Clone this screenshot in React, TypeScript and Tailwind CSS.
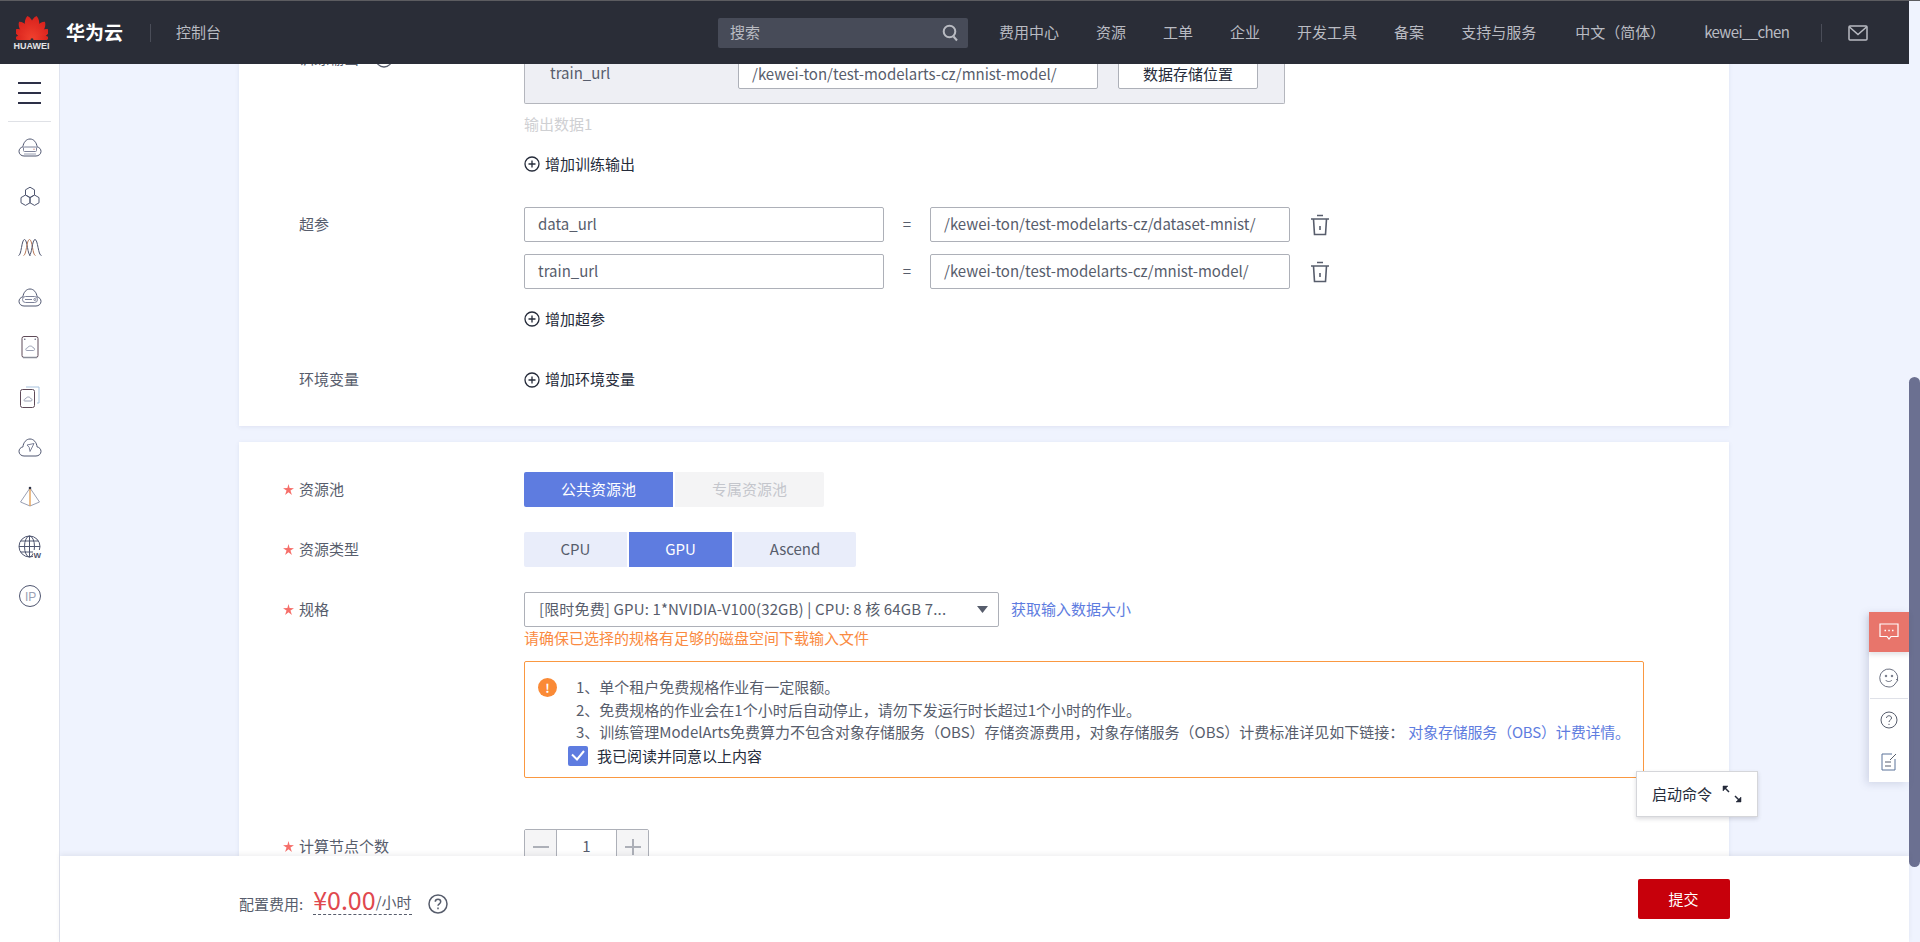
import type { ReactNode } from "react"

const navItems = ["费用中心", "资源", "工单", "企业", "开发工具", "备案", "支持与服务"]

function HuaweiLogo() {
  const petals = [
    [-11, 24],
    [11, 24],
    [-36, 22],
    [36, 22],
    [-61, 20],
    [61, 20],
    [-84, 17],
    [84, 17],
  ]
  return (
    <svg width="32" height="26" viewBox="0 0 32 26">
      <defs>
        <linearGradient id="petal" x1="0" y1="0" x2="0" y2="1">
          <stop offset="0" stopColor="#d8211c" />
          <stop offset="1" stopColor="#f0402e" />
        </linearGradient>
      </defs>
      {petals.map(([a, l]) => (
        <path
          key={a}
          transform={`translate(16 25.5) rotate(${a})`}
          fill="url(#petal)"
          d={`M0 -1 C${-l * 0.27} ${-l * 0.4} ${-l * 0.22} ${-l * 0.85} 0 ${-l} C${l * 0.22} ${-l * 0.85} ${l * 0.27} ${-l * 0.4} 0 -1Z`}
        />
      ))}
    </svg>
  )
}

function CloudBase({ children }: { children?: ReactNode }) {
  return (
    <svg width="24" height="24" viewBox="0 0 24 24" fill="none" stroke="#4f5670" strokeWidth="1">
      <path d="M6 20h12c2.700 0 5-1.900 5-4.600 0-2.300-1.600-4.100-3.900-4.500C18.600 6.500 15.800 3 12 3S5.400 6.500 4.900 10.900C2.600 11.300 1 13.100 1 15.400 1 18.100 3.300 20 6 20z" />
      {children}
    </svg>
  )
}

const sideIcons: ReactNode[] = [
  <CloudBase key="a">
    <rect x="5.500" y="11" width="13" height="4.500" rx="1" stroke="#7d8299" />
    <path d="M6 18h12" stroke="#9aa0b4" />
    <circle cx="16" cy="13.200" r=".6" fill="#c26a5a" stroke="none" />
  </CloudBase>,
  <svg key="b" width="24" height="24" viewBox="0 0 24 24" fill="none" stroke="#4f5670" strokeWidth="1">
    <path d="M12 2.200l4.500 2.600v5.200L12 12.600 7.500 10V4.800z" />
    <path d="M7.500 10l4.500 2.600v5.200l-4.500 2.600L3 17.800v-5.200z" />
    <path d="M16.500 10l4.500 2.600v5.200l-4.500 2.600-4.500-2.600v-5.200z" />
  </svg>,
  <svg key="c" width="24" height="24" viewBox="0 0 24 24" fill="none" stroke="#4f5670" strokeWidth="1">
    <path d="M.5 20.500C3.500 20.500 3.500 4.500 6.500 4.500S9.500 20.500 12.500 20.500" />
    <path d="M5.500 20.500C8.500 20.500 8.500 4.500 11.500 4.500S14.500 20.500 17.500 20.500" stroke="#b97a5a" />
    <path d="M11 20.500C14 20.500 14 4.500 17 4.500S20 20.500 23.500 20.500" />
  </svg>,
  <CloudBase key="d">
    <rect x="4.500" y="10.500" width="15" height="6" rx="3" stroke="#7d8299" />
    <path d="M7 13.500h7" stroke="#7d8299" />
    <circle cx="16.800" cy="13.500" r="1" stroke="#7d8299" />
  </CloudBase>,
  <svg key="e" width="24" height="24" viewBox="0 0 24 24" fill="none" stroke="#4f5670" strokeWidth="1">
    <rect x="4" y="1.500" width="16" height="21" rx="2" stroke="#5f4a58" />
    <path d="M5 22.500h14" stroke="#8a8d98" strokeWidth="1.500" />
    <circle cx="6.800" cy="4.200" r=".7" fill="#4f5670" stroke="none" />
    <circle cx="17.200" cy="4.200" r=".7" fill="#4f5670" stroke="none" />
    <path d="M8.500 15.500h7c1.500 0 1.500-2.800-.5-2.800-.4-2.200-4.800-2.200-5.300 0-1.800 0-2.500 2.800-1.200 2.800z" stroke="#9aa0b4" />
  </svg>,
  <svg key="f" width="24" height="24" viewBox="0 0 24 24" fill="none" stroke="#4f5670" strokeWidth="1">
    <path d="M8 2h13v16h-2" stroke="#a9c3de" />
    <rect x="2.500" y="4.500" width="14" height="18" rx="2" stroke="#5f4a58" />
    <path d="M6.500 16h6.500c1.400 0 1.300-2.500-.4-2.500-.5-2-4.200-2-4.700 0-1.600 0-2.400 2.500-1.400 2.500z" stroke="#9aa0b4" />
  </svg>,
  <CloudBase key="g">
    <path d="M9 9l7-1.500-4 8-.8-4.200z" stroke="#7d8299" />
  </CloudBase>,
  <svg key="h" width="24" height="24" viewBox="0 0 24 24" fill="none" stroke="#9aa0b4" strokeWidth="1">
    <path d="M12 3L2.500 17 12 21l9.500-4z" />
    <path d="M12 3v18" stroke="#e09a4c" strokeWidth="1.300" />
    <circle cx="12" cy="3" r="1.300" fill="#2f3448" stroke="none" />
  </svg>,
  <svg key="i" width="24" height="24" viewBox="0 0 24 24" fill="none" stroke="#4f5670" strokeWidth="1">
    <circle cx="11.500" cy="11.500" r="10.500" />
    <ellipse cx="11.500" cy="11.500" rx="5" ry="10.500" />
    <path d="M1 11.500h21M2.500 6h18M2.500 17h18M11.500 1v21" />
    <rect x="15" y="15" width="9" height="9" fill="#fff" stroke="none" />
    <text x="15.500" y="23" fontSize="8" fontWeight="700" fill="#4f5670" stroke="none" fontFamily="'Liberation Sans', sans-serif">W</text>
  </svg>,
  <svg key="j" width="24" height="24" viewBox="0 0 24 24" fill="none" stroke="#4f5670" strokeWidth="1">
    <circle cx="12" cy="12" r="10.500" />
    <text x="7" y="16.500" fontSize="12" fill="#9aa0b4" stroke="none" fontFamily="'Liberation Sans', sans-serif">IP</text>
  </svg>,
]

const sideIconTops = ["mt-[14px]", "mt-[25px]", "mt-[26px]", "mt-[27px]", "mt-[25px]", "mt-[26px]", "mt-[27px]", "mt-[25px]", "mt-[26px]", "mt-[25px]"]

function Sidebar() {
  return (
    <aside className="w-[60px] shrink-0 bg-white border-r border-[#dfe3ee] flex flex-col items-center">
      <div className="w-[23px] mt-[18px] flex flex-col gap-[8px]">
        <div className="h-[2px] bg-[#2d3047]" />
        <div className="h-[2px] bg-[#2d3047]" />
        <div className="h-[2px] bg-[#2d3047]" />
      </div>
      <div className="w-[43px] h-px bg-[#dfe1e6] mt-[17px]" />
      {sideIcons.map((icon, i) => (
        <div key={i} className={sideIconTops[i]}>
          {icon}
        </div>
      ))}
    </aside>
  )
}

function Header() {
  return (
    <header className="h-[63px] shrink-0 bg-[#2a2d37] flex items-center text-[15px] text-[#b9bbc2]">
      <div className="ml-[15px] w-[33px] flex flex-col items-center">
        <HuaweiLogo />
        <span className="text-[9px] leading-[10px] font-bold text-[#e4e4e6] font-['Liberation_Sans',sans-serif] mt-[1px]">HUAWEI</span>
      </div>
      <span className="ml-[18px] text-[19px] font-bold text-white">华为云</span>
      <div className="ml-[27px] w-px h-[18px] bg-[#4a4d58]" />
      <span className="ml-[25px]">控制台</span>
      <div className="ml-[497px] w-[250px] h-[30px] rounded-[2px] bg-[#474b58] flex items-center justify-between px-[12px]">
        <span>搜索</span>
        <svg width="17" height="18" viewBox="0 0 17 18" fill="none" stroke="#b9bbc2" strokeWidth="2" className="-mr-[3px]">
          <circle cx="7.500" cy="7.500" r="5.800" />
          <path d="M11.500 12.500l3.500 4" />
        </svg>
      </div>
      <nav className="ml-[31px] flex items-center gap-[37px]">
        {navItems.map((item) => (
          <span key={item}>{item}</span>
        ))}
      </nav>
      <span className="ml-[39px]">中文（简体）</span>
      <span className="ml-[39px] tracking-[-0.6px]">kewei__chen</span>
      <div className="ml-[32px] w-px h-[18px] bg-[#4a4d58]" />
      <svg width="20" height="16" viewBox="0 0 20 16" fill="none" stroke="#b9bbc2" strokeWidth="1.500" className="ml-[26px]">
        <rect x="1" y="1" width="18" height="14" rx="1" />
        <path d="M1.500 2L10 9.500 18.500 2" />
      </svg>
    </header>
  )
}

function PlusCircle() {
  return (
    <svg width="16" height="16" viewBox="0 0 16 16" fill="none" stroke="#252b3a" strokeWidth="1.300">
      <circle cx="8" cy="8" r="7" />
      <path d="M8 4.500v7M4.500 8h7" />
    </svg>
  )
}

function AddLink({ children, className }: { children: ReactNode; className?: string }) {
  return (
    <div className={`h-[20px] flex items-center gap-[5px] text-[#252b3a] ${className ?? ""}`}>
      <PlusCircle />
      <span>{children}</span>
    </div>
  )
}

function Trash() {
  return (
    <svg width="20" height="22" viewBox="0 0 20 22" fill="none" stroke="#575d6c" strokeWidth="1.600">
      <path d="M1 5h18M7 1.500h6" />
      <path d="M3.500 5l1 15.500h11l1-15.500" />
      <path d="M10 12v4" />
    </svg>
  )
}

function Field({ value, size }: { value: string; size: string }) {
  return (
    <div className={`${size} bg-white border border-[#adb0b8] rounded-[2px] px-[13px] flex items-center text-[#575d6c]`}>
      {value}
    </div>
  )
}

function Star() {
  return (
    <svg width="11" height="11" viewBox="0 0 10 10" fill="#f66f6a">
      <path d="M5 0l1 3.700L10 3.800 6.800 6l1.300 4L5 7.500 1.900 10l1.300-4L0 3.800l4 -.1z" />
    </svg>
  )
}

function Label({ required, children }: { required?: boolean; children: ReactNode }) {
  return (
    <div className="w-[241px] shrink-0 h-[35px] flex items-center text-[#575d6c]">
      <span className="w-[16px]">{required && <Star />}</span>
      {children}
    </div>
  )
}

function HyperRow({ name, value }: { name: string; value: string }) {
  return (
    <div className="flex items-center">
      <Field value={name} size="h-[35px] w-[360px]" />
      <span className="w-[46px] text-center text-[#575d6c]">=</span>
      <Field value={value} size="h-[35px] w-[360px]" />
      <div className="ml-[20px]">
        <Trash />
      </div>
    </div>
  )
}

function Seg({ active, muted, width, children }: { active?: boolean; muted?: boolean; width: string; children: ReactNode }) {
  const tone = active ? "bg-[#5e7ce0] text-white" : muted ? "bg-[#f4f4f5] text-[#c4c6cc]" : "bg-[#e9edfa] text-[#575d6c]"
  return <div className={`h-[35px] ${width} ${tone} flex items-center justify-center first:rounded-l-[2px] last:rounded-r-[2px]`}>{children}</div>
}

function TrainingCard() {
  return (
    <section className="bg-white shadow-[0_1px_4px_rgba(100,110,160,0.12)] pl-[44px] pb-[29px] -mt-[23px]">
      <div className="flex">
        <div className="w-[241px] shrink-0 h-[35px] flex items-center gap-[16px] pl-[16px] text-[#575d6c]">
          <span>训练输出</span>
          <svg width="18" height="18" viewBox="0 0 18 18" fill="none" stroke="#575d6c" strokeWidth="1.300">
            <circle cx="9" cy="9" r="8" />
            <path d="M9 5v5M9 12v1.500" />
          </svg>
        </div>
        <div>
          <div className="w-[761px] h-[63px] bg-[#eeeff4] border-r border-b border-l border-[#b4b6bd] rounded-b-[2px] pt-[19px] flex">
            <div className="w-[213px] pl-[25px] h-[26px] flex items-center text-[#575d6c]">train_url</div>
            <Field value="/kewei-ton/test-modelarts-cz/mnist-model/" size="h-[29px] w-[360px]" />
            <div className="ml-[20px] w-[140px] h-[29px] bg-white border border-[#adb0b8] rounded-[2px] flex items-center justify-center text-[#252b3a]">数据存储位置</div>
          </div>
          <div className="mt-[10px] h-[20px] leading-[20px] text-[#cfd0d3]">输出数据1</div>
          <AddLink className="mt-[20px]">增加训练输出</AddLink>
        </div>
      </div>
      <div className="flex mt-[33px]">
        <Label>超参</Label>
        <div className="flex flex-col gap-[12px]">
          <HyperRow name="data_url" value="/kewei-ton/test-modelarts-cz/dataset-mnist/" />
          <HyperRow name="train_url" value="/kewei-ton/test-modelarts-cz/mnist-model/" />
          <AddLink className="mt-[8px]">增加超参</AddLink>
        </div>
      </div>
      <div className="flex items-center mt-[33px]">
        <Label>环境变量</Label>
        <AddLink>增加环境变量</AddLink>
      </div>
    </section>
  )
}

function ResourceCard() {
  return (
    <section className="bg-white shadow-[0_1px_4px_rgba(100,110,160,0.12)] pl-[44px] pt-[30px] mt-[16px] pb-[40px]">
      <div className="flex">
        <Label required>资源池</Label>
        <div className="flex gap-[2px]">
          <Seg active width="w-[149px]">公共资源池</Seg>
          <Seg muted width="w-[149px]">专属资源池</Seg>
        </div>
      </div>
      <div className="flex mt-[25px]">
        <Label required>资源类型</Label>
        <div className="flex gap-[2px]">
          <Seg width="w-[103px]">CPU</Seg>
          <Seg active width="w-[103px]">GPU</Seg>
          <Seg width="w-[122px]">Ascend</Seg>
        </div>
      </div>
      <div className="flex mt-[25px]">
        <Label required>规格</Label>
        <div>
          <div className="flex items-center">
            <div className="w-[475px] h-[35px] border border-[#adb0b8] rounded-[2px] flex items-center justify-between pl-[14px] pr-[10px] text-[#575d6c]">
              <span className="tracking-[0.15px]">[限时免费] GPU: 1*NVIDIA-V100(32GB) | CPU: 8 核 64GB 7...</span>
              <svg width="11" height="7" viewBox="0 0 11 7" fill="#575d6c">
                <path d="M0 0h11L5.500 7z" />
              </svg>
            </div>
            <span className="ml-[12px] text-[#5e7ce0]">获取输入数据大小</span>
          </div>
          <div className="h-[20px] leading-[20px] mt-[1px] text-[#fa8a41]">请确保已选择的规格有足够的磁盘空间下载输入文件</div>
          <div className="mt-[13px] w-[1120px] h-[117px] border border-[#fa9841] rounded-[2px] pt-[14px] flex">
            <div className="ml-[13px] mt-[2px] w-[19px] h-[19px] rounded-full bg-[#fa8a36] text-white text-[12px] font-bold flex items-center justify-center">!</div>
            <div className="ml-[19px] leading-[22.500px] text-[#575d6c]">
              <p>1、单个租户免费规格作业有一定限额。</p>
              <p>2、免费规格的作业会在1个小时后自动停止，请勿下发运行时长超过1个小时的作业。</p>
              <p>
                3、训练管理ModelArts免费算力不包含对象存储服务（OBS）存储资源费用，对象存储服务（OBS）计费标准详见如下链接：
                <span className="ml-[4px] tracking-[-0.2px] text-[#5e7ce0]">对象存储服务（OBS）计费详情。</span>
              </p>
              <div className="flex items-center gap-[9px] -ml-[8px] mt-[1px] text-[#252b3a]">
                <div className="w-[20px] h-[20px] rounded-[2px] bg-[#5e7ce0] flex items-center justify-center">
                  <svg width="14" height="11" viewBox="0 0 14 11" fill="none" stroke="#fff" strokeWidth="2">
                    <path d="M1 4.500l5 5 7-8.500" />
                  </svg>
                </div>
                <span>我已阅读并同意以上内容</span>
              </div>
            </div>
          </div>
        </div>
      </div>
      <div className="flex mt-[51px]">
        <Label required>计算节点个数</Label>
        <div className="flex h-[35px] border border-[#adb0b8] rounded-[2px] text-[#575d6c]">
          <div className="w-[32px] bg-[#f5f5f6] border-r border-[#adb0b8] flex items-center justify-center">
            <span className="w-[16px] h-[2px] bg-[#adb0b8]" />
          </div>
          <div className="w-[59px] flex items-center justify-center">1</div>
          <div className="w-[32px] bg-[#f5f5f6] border-l border-[#adb0b8] flex items-center justify-center">
            <svg width="16" height="16" viewBox="0 0 16 16" stroke="#adb0b8" strokeWidth="2">
              <path d="M8 0v16M0 8h16" />
            </svg>
          </div>
        </div>
      </div>
    </section>
  )
}

function FooterBar() {
  return (
    <footer className="absolute left-[60px] right-0 bottom-0 h-[86px] bg-white shadow-[0_-2px_5px_rgba(60,60,80,0.08)] flex items-center pl-[179px] text-[#575d6c] z-10">
      <span className="pt-[10px]">配置费用:</span>
      <div className="ml-[10px] h-[31px] border-b border-dashed border-[#575d6c] flex items-end leading-[28px]">
        <span className="text-[25px] text-[#e0484e] leading-[30px]">¥0.00</span>
        <span className="leading-[24px]">/小时</span>
      </div>
      <svg width="20" height="20" viewBox="0 0 20 20" fill="none" stroke="#575d6c" strokeWidth="1.500" className="ml-[16px] mt-[9px]">
        <circle cx="10" cy="10" r="9" />
        <path d="M7.300 7.800c0-3.400 5.400-3.400 5.400 0 0 2-2.700 2-2.700 4" />
        <path d="M10 13.600v1.600" />
      </svg>
      <div className="ml-[1190px] w-[92px] h-[40px] bg-[#c7000b] rounded-[2px] text-white flex items-center justify-center">提交</div>
    </footer>
  )
}

function SideTools() {
  return (
    <div className="absolute right-0 top-[611px] w-[40px] h-[170px] bg-white shadow-[-3px_2px_8px_rgba(90,100,140,0.2)] flex flex-col items-center z-20">
      <div className="w-[40px] h-[40px] bg-[#e8756b] flex items-center justify-center shadow-[0_3px_4px_rgba(90,90,100,0.15)]">
        <svg width="20" height="18" viewBox="0 0 20 18" fill="none" stroke="#fff" strokeWidth="1.200">
          <path d="M1 1h18v12.500h-7l-2 2.500-2-2.500H1z" />
          <path d="M5.500 7.500h1.500M9.300 7.500h1.500M13 7.500h1.500" strokeWidth="1.500" />
        </svg>
      </div>
      <svg width="20" height="20" viewBox="0 0 20 20" fill="none" stroke="#6b7080" strokeWidth="1" className="mt-[16px]">
        <path d="M18.500 12A9 9 0 1 0 10 19c2 0 3.500-.6 5-1.800l4-5.200-2-.5" />
        <circle cx="7" cy="8" r=".8" fill="#6b7080" />
        <circle cx="13" cy="8" r=".8" fill="#6b7080" />
        <path d="M6.500 12c1.500 2 5 2 6.500 0" />
      </svg>
      <div className="w-[38px] h-px bg-[#dfe1e8] mt-[10px]" />
      <svg width="18" height="18" viewBox="0 0 18 18" fill="none" stroke="#575d6c" strokeWidth="1" className="mt-[12px]">
        <circle cx="9" cy="9" r="8" />
        <path d="M6.500 7c0-3 5-3 5 0 0 2-2.500 2-2.500 4" />
        <path d="M9 12.800v1.200" />
      </svg>
      <svg width="16" height="18" viewBox="0 0 16 18" fill="none" stroke="#575d6c" strokeWidth="1" className="mt-[24px]">
        <path d="M11 1H1v16h13V6" stroke="#5a7399" />
        <path d="M4 9h6M4 13h6" />
        <path d="M9 7l6-6" />
      </svg>
    </div>
  )
}

function CommandPopup() {
  return (
    <div className="absolute left-[1636px] top-[770px] w-[122px] h-[46px] bg-white border border-[#d5d6da] shadow-[0_2px_4px_rgba(60,60,80,0.18)] flex items-center pl-[15px] gap-[10px] text-[#252b3a] z-20">
      <span>启动命令</span>
      <svg width="20" height="18" viewBox="0 0 20 18" fill="#252b3a" stroke="#252b3a" strokeWidth="1.500">
        <path d="M3 3l4 4M13 11l4 4" />
        <path d="M1 1h5L1 6z" strokeWidth=".5" />
        <path d="M19 17h-5l5-5z" strokeWidth=".5" />
      </svg>
    </div>
  )
}

export default function App() {
  return (
    <div className="h-[942px] overflow-hidden bg-[#eff3fe] text-[15px] font-['Noto_Sans_CJK_SC','Noto_Sans',sans-serif] flex flex-col">
      <div className="h-px shrink-0 bg-[#5c5c60]" />
      <div className="flex-1 min-h-0 flex">
        <div className="relative flex-1 min-w-0 flex flex-col">
          <Header />
          <div className="flex-1 min-h-0 flex">
            <Sidebar />
            <main className="flex-1 min-w-0 overflow-hidden pl-[179px]">
              <div className="w-[1490px]">
                <TrainingCard />
                <ResourceCard />
              </div>
            </main>
          </div>
          <FooterBar />
          <SideTools />
          <CommandPopup />
        </div>
        <div className="w-[11px] shrink-0 pt-[376px]">
          <div className="h-[490px] rounded-full bg-[#6b7091]" />
        </div>
      </div>
    </div>
  )
}
